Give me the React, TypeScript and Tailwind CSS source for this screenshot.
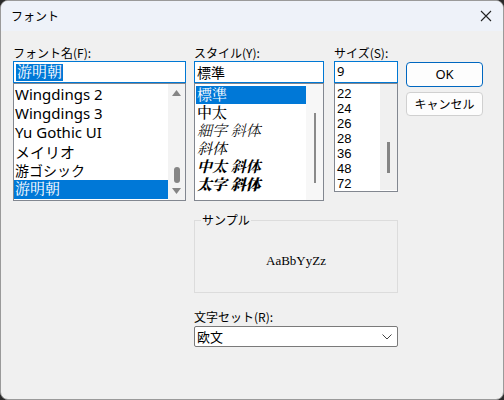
import React from "react";

const ui = { fontFamily: '"Noto Sans CJK JP", "Noto Sans", sans-serif' };
const serif = { fontFamily: '"Liberation Serif", "Noto Serif CJK JP", serif' };

function Label({ children }: { children: React.ReactNode }) {
  return <div className="h-[17px] text-[12px] leading-[17px] text-black">{children}</div>;
}

function Input({ children }: { children: React.ReactNode }) {
  return (
    <div className="h-[22px] border border-[#0078d4] bg-white flex items-center px-[2px] text-[13px] text-black">
      {children}
    </div>
  );
}

const fonts: { name: string; cls: string; style?: React.CSSProperties }[] = [
  { name: "Wingdings 2", cls: "text-[15px]", style: { fontFamily: '"Noto Sans", sans-serif' } },
  { name: "Wingdings 3", cls: "text-[15px]", style: { fontFamily: '"Noto Sans", sans-serif' } },
  { name: "Yu Gothic UI", cls: "text-[15px]", style: { fontFamily: '"Noto Sans", sans-serif' } },
  { name: "メイリオ", cls: "text-[15px]", style: ui },
  { name: "游ゴシック", cls: "text-[14px] text-[#333]", style: ui },
];

const styles = [
  { name: "中太", cls: "font-medium" },
  { name: "細字 斜体", cls: "italic font-light text-[#777]" },
  { name: "斜体", cls: "italic" },
  { name: "中太 斜体", cls: "italic font-bold" },
  { name: "太字 斜体", cls: "italic font-black" },
];

const sizes = ["22", "24", "26", "28", "36", "48", "72"];

export default function App() {
  return (
    <div className="w-[504px] h-[400px] bg-[#2a2a2a]" style={ui}>
      <div className="w-full h-full rounded-[8px] border border-[#9a9a9a] bg-[#f0f0f0] overflow-hidden flex flex-col">
        {/* title bar */}
        <div className="h-[30px] bg-[#eef2f9] flex items-center justify-between pl-[10px] pr-[10px] shrink-0">
          <span className="text-[12px] text-black">フォント</span>
          <svg width="12" height="12" viewBox="0 0 12 12" className="mr-[1px]">
            <path d="M1 1 L11 11 M11 1 L1 11" stroke="#222" strokeWidth="1.1" />
          </svg>
        </div>

        <div className="pt-[13px] pl-[12px]">
          <div className="flex">
            {/* font name */}
            <div className="w-[173px]">
              <Label>フォント名(F):</Label>
              <Input>
                <span className="bg-[#0078d7] text-white text-[15px] leading-[17px] px-[1px]" style={serif}>游明朝</span>
              </Input>
              <div className="h-[118px] border border-[#828790] bg-white flex">
                <div className="flex-1 pt-[1px]">
                  {fonts.map((f) => (
                    <div key={f.name} className={"h-[19px] leading-[19px] pl-[1px] text-black " + f.cls} style={f.style}>
                      {f.name}
                    </div>
                  ))}
                  <div className="h-[19px] leading-[19px] pl-[1px] bg-[#0078d7] text-white text-[15px]" style={serif}>
                    游明朝
                  </div>
                </div>
                <div className="w-[17px] bg-[#f3f3f3] flex flex-col items-center justify-between py-[6px]">
                  <svg width="9" height="6" viewBox="0 0 9 6"><path d="M0 6 L4.5 0 L9 6 Z" fill="#858585" /></svg>
                  <div className="flex-1" />
                  <div className="w-[6px] h-[16px] rounded-[3px] bg-[#858585] mb-[5px]" />
                  <svg width="9" height="6" viewBox="0 0 9 6"><path d="M0 0 L4.5 6 L9 0 Z" fill="#858585" /></svg>
                </div>
              </div>
            </div>

            {/* style */}
            <div className="w-[130px] ml-[8px]">
              <Label>スタイル(Y):</Label>
              <Input>
                <span className="text-[14px]">標準</span>
              </Input>
              <div className="h-[118px] border border-[#828790] bg-white flex">
                <div className="flex-1 pt-[2px] pl-[1px]">
                  <div className="h-[18px] leading-[18px] bg-[#0078d7] text-white text-[15px] pl-[1px]" style={serif}>標準</div>
                  {styles.map((s) => (
                    <div key={s.name} className={"h-[18px] leading-[18px] text-[15px] pl-[1px] text-black " + s.cls} style={serif}>
                      {s.name}
                    </div>
                  ))}
                </div>
                <div className="w-[17px] bg-[#f7f7f7] flex justify-center pt-[29px]">
                  <div className="w-[2px] h-[70px] bg-[#8a8a8a]" />
                </div>
              </div>
            </div>

            {/* size */}
            <div className="w-[64px] ml-[10px]">
              <Label>サイズ(S):</Label>
              <Input>
                <span className="text-[13px]" style={{ fontFamily: '"Noto Sans", sans-serif' }}>9</span>
              </Input>
              <div className="h-[109px] border border-[#828790] bg-white flex">
                <div className="flex-1 pt-[2px] pl-[2px]" style={{ fontFamily: '"Liberation Sans", Arial, sans-serif' }}>
                  {sizes.map((s) => (
                    <div key={s} className="h-[15px] leading-[15px] text-[13px] text-black">{s}</div>
                  ))}
                </div>
                <div className="w-[17px] bg-[#f0f0f0] flex justify-center pt-[58px] mb-[1px]">
                  <div className="w-[3px] h-[31px] bg-[#858585]" />
                </div>
              </div>
            </div>

            {/* buttons */}
            <div className="w-[77px] ml-[8px] pt-[18px] flex flex-col gap-[5px]">
              <button className="h-[25px] rounded-[4px] border border-[#0067c0] bg-[#fdfdfd] text-[13px] text-black" style={{ fontFamily: '"Noto Sans", sans-serif' }}>
                OK
              </button>
              <button className="h-[24px] rounded-[4px] border border-[#d0d0d0] bg-[#fdfdfd] text-[12px] text-black">
                キャンセル
              </button>
            </div>
          </div>

          {/* sample + charset */}
          <div className="ml-[181px] w-[204px] mt-[19px]">
            <div className="relative h-[73px] border border-[#dcdcdc] mt-[6px] flex items-center justify-center pt-[9px]">
              <span className="absolute left-[6px] top-[-10px] px-[1px] bg-[#f0f0f0] text-[12px] text-black leading-[17px]">サンプル</span>
              <span className="text-[13px] text-black" style={serif}>AaBbYyZz</span>
            </div>
            <div className="mt-[15px]">
              <Label>文字セット(R):</Label>
              <div className="mt-[1px] h-[21px] border border-[#7a7a7a] bg-white flex items-center justify-between pl-[2px] pr-[5px] rounded-[2px]">
                <span className="text-[13px] text-black">欧文</span>
                <svg width="10" height="6" viewBox="0 0 10 6">
                  <path d="M0.5 0.5 L5 5 L9.5 0.5" fill="none" stroke="#444" strokeWidth="1" />
                </svg>
              </div>
            </div>
          </div>
        </div>
      </div>
    </div>
  );
}
